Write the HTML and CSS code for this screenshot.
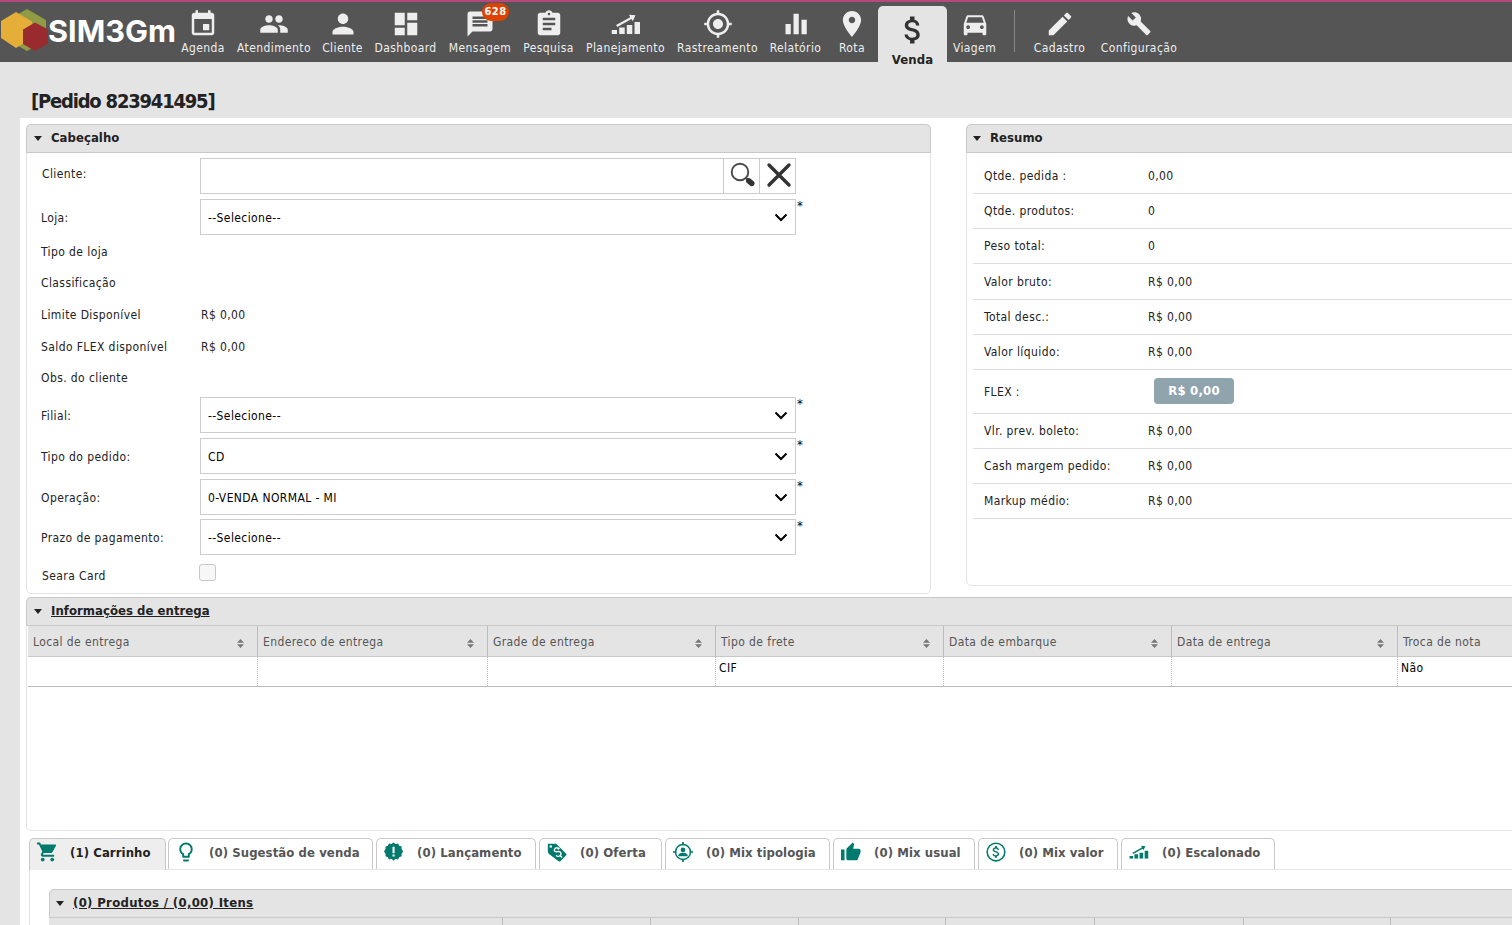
FILE: index.html
```html
<!DOCTYPE html>
<html lang="pt-BR">
<head>
<meta charset="utf-8">
<title>SIM3Gm - Pedido</title>
<link rel="stylesheet" href="styles.css">
</head>
<body>
<svg class="defs" width="0" height="0">
  <symbol id="growth" viewBox="0 0 29 20"><path d="M0 16h5.500v4H0zM7.700 13.500h5.500V20H7.700zM15.300 11h5.500v9h-5.500zM23 8h5.500v12H23z"/><path d="M4.600 11L18.800 3.200 17.500.800l6.500.400-2.700 6-1.300-2.100L5.800 13z"/></symbol>
  <symbol id="sort" viewBox="0 0 7 9"><path d="M3.500 0L7 3.800H0zM0 5.200h7L3.500 9z"/></symbol>
</svg>
<header class="topbar">
  <svg class="logo" width="175" height="60" viewBox="0 2 175 60">
    <path fill="#8f9c45" d="M27 9l19 11v20L27 51 8 40V20z"/>
    <path fill="#e5ae39" d="M16 12l16 9.500V38L16 48 1 38V21z"/>
    <path fill="#992a2e" d="M35 22.500l13 7v14L35 51 23 44V29.500z"/>
    <text x="48" y="42" textLength="128" lengthAdjust="spacingAndGlyphs">SIM3Gm</text>
  </svg>
  <nav class="nav">
    <a class="item agenda"><svg viewBox="0 0 24 24"><path d="M19 3h-1V1h-2v2H8V1H6v2H5c-1.110 0-1.990.900-1.990 2L3 19c0 1.100.890 2 2 2h14c1.100 0 2-.900 2-2V5c0-1.100-.900-2-2-2zm0 16H5V8h14v11zM17 12h-5v5h5v-5z"/></svg><span>Agenda</span></a>
    <a class="item atendimento"><svg viewBox="0 0 24 24"><path d="M16 11c1.660 0 2.990-1.340 2.990-3S17.660 5 16 5c-1.660 0-3 1.340-3 3s1.340 3 3 3zm-8 0c1.660 0 2.990-1.340 2.990-3S9.660 5 8 5C6.340 5 5 6.340 5 8s1.340 3 3 3zm0 2c-2.330 0-7 1.170-7 3.500V19h14v-2.500c0-2.330-4.670-3.500-7-3.500zm8 0c-.290 0-.620.020-.970.050 1.160.840 1.970 1.970 1.970 3.450V19h6v-2.500c0-2.330-4.670-3.500-7-3.500z"/></svg><span>Atendimento</span></a>
    <a class="item cliente"><svg viewBox="0 0 24 24"><path d="M12 12c2.210 0 4-1.790 4-4s-1.790-4-4-4-4 1.790-4 4 1.790 4 4 4zm0 2c-2.670 0-8 1.340-8 4v2h16v-2c0-2.660-5.330-4-8-4z" transform="translate(-.600 -.600) scale(1.050)"/></svg><span>Cliente</span></a>
    <a class="item dashboard"><svg viewBox="0 0 24 24"><path d="M3 13h8V3H3v10zm0 8h8v-6H3v6zm10 0h8V11h-8v10zm0-18v6h8V3h-8z"/></svg><span>Dashboard</span></a>
    <a class="item mensagem"><svg viewBox="0 0 24 24"><path d="M20 2H4c-1.100 0-1.990.900-1.990 2L2 22l4-4h14c1.100 0 2-.900 2-2V4c0-1.100-.900-2-2-2zm-2 12H6v-2h12v2zm0-3H6V9h12v2zm0-3H6V6h12v2z"/></svg><span>Mensagem</span><b class="badge">628</b></a>
    <a class="item pesquisa"><svg viewBox="0 0 24 24"><path d="M19 3h-4.180C14.400 1.840 13.300 1 12 1c-1.300 0-2.400.840-2.820 2H5c-1.100 0-2 .900-2 2v14c0 1.100.900 2 2 2h14c1.100 0 2-.900 2-2V5c0-1.100-.900-2-2-2zm-7 0c.550 0 1 .450 1 1s-.450 1-1 1-1-.450-1-1 .450-1 1-1zm2 14H7v-2h7v2zm3-4H7v-2h10v2zm0-4H7V7h10v2z"/></svg><span>Pesquisa</span></a>
    <a class="item planejamento"><svg viewBox="-.500 -5 30 30"><use href="#growth" width="29" height="20"/></svg><span>Planejamento</span></a>
    <a class="item rastreamento"><svg viewBox="0 0 24 24"><path d="M12 8c-2.210 0-4 1.790-4 4s1.790 4 4 4 4-1.790 4-4-1.790-4-4-4zm8.940 3c-.460-4.170-3.770-7.480-7.940-7.940V1h-2v2.060C6.830 3.520 3.520 6.830 3.060 11H1v2h2.060c.460 4.170 3.770 7.480 7.940 7.940V23h2v-2.060c4.170-.460 7.480-3.770 7.940-7.940H23v-2h-2.060zM12 19c-3.870 0-7-3.130-7-7s3.130-7 7-7 7 3.130 7 7-3.130 7-7 7z"/></svg><span>Rastreamento</span></a>
    <a class="item relatorio"><svg viewBox="0 0 24 24"><path d="M3.600 12h4.200v8.200H3.600zM10 3.800h4.200v16.400H10zM16.400 8.500h4.200v11.700h-4.200z"/></svg><span>Relatório</span></a>
    <a class="item rota"><svg viewBox="0 0 24 24"><path d="M12 2C8.130 2 5 5.130 5 9c0 5.250 7 13 7 13s7-7.750 7-13c0-3.870-3.130-7-7-7zm0 9.500c-1.380 0-2.500-1.120-2.500-2.500s1.120-2.500 2.500-2.500 2.500 1.120 2.500 2.500-1.120 2.500-2.500 2.500z" transform="translate(-.500 -.500) scale(1.040)"/></svg><span>Rota</span></a>
    <a class="item venda"><svg viewBox="0 0 24 24"><path d="M11.800 10.900c-2.270-.590-3-1.200-3-2.150 0-1.090 1.010-1.850 2.700-1.850 1.780 0 2.440.850 2.500 2.100h2.210c-.070-1.720-1.120-3.300-3.210-3.810V3h-3v2.160c-1.940.420-3.500 1.680-3.500 3.610 0 2.310 1.910 3.460 4.700 4.130 2.500.600 3 1.480 3 2.410 0 .690-.490 1.790-2.700 1.790-2.060 0-2.870-.920-2.980-2.100h-2.200c.120 2.190 1.760 3.420 3.680 3.830V21h3v-2.150c1.950-.370 3.500-1.500 3.500-3.550 0-2.840-2.430-3.810-4.700-4.400z"/></svg><span>Venda</span></a>
    <a class="item viagem"><svg viewBox="0 0 24 24"><path d="M18.920 6.010C18.720 5.420 18.160 5 17.500 5h-11c-.660 0-1.210.420-1.420 1.010L3 12v8c0 .550.450 1 1 1h1c.550 0 1-.450 1-1v-1h12v1c0 .550.450 1 1 1h1c.550 0 1-.450 1-1v-8l-2.080-5.990zM6.500 16c-.830 0-1.500-.670-1.500-1.500S5.670 13 6.500 13s1.500.670 1.500 1.500S7.330 16 6.500 16zm11 0c-.830 0-1.500-.670-1.500-1.500s.670-1.500 1.500-1.500 1.500.670 1.500 1.500-.670 1.500-1.500 1.500zM5 11l1.500-4.500h11L19 11H5z"/></svg><span>Viagem</span></a>
    <i class="sep"></i>
    <a class="item cadastro"><svg viewBox="0 0 24 24"><path d="M3 17.250V21h3.750L17.810 9.940l-3.750-3.750L3 17.250zM20.710 7.040c.390-.390.390-1.020 0-1.410l-2.340-2.340c-.390-.390-1.020-.390-1.410 0l-1.830 1.830 3.750 3.750 1.830-1.830z"/></svg><span>Cadastro</span></a>
    <a class="item config"><svg viewBox="-2.300 -2 28.600 28.600"><path d="M22.700 19l-9.100-9.100c.900-2.300.400-5-1.500-6.900-2-2-5-2.400-7.400-1.300L9 6 6 9 1.600 4.700C.400 7.100.900 10.100 2.900 12.100c1.900 1.900 4.600 2.400 6.900 1.500l9.100 9.100c.400.400 1 .400 1.400 0l2.300-2.300c.500-.400.500-1.100.100-1.400z"/></svg><span>Configuração</span></a>
  </nav>
</header>
<h1>[Pedido 823941495]</h1>
<main>
  <div class="columns">
    <section class="panel order">
      <h2>Cabeçalho</h2>
      <div class="fields">
        <div class="row client"><label>Cliente:</label><div class="search"><input type="text"><button><svg width="26" height="26" viewBox="0 0 26 26"><circle cx="10" cy="10" r="8.300" fill="#fff" stroke="#4a4a4a" stroke-width="1.900"/><path d="M16 16l2 2" stroke="#444" stroke-width="2"/><path d="M18.800 18.800l3 2.600" stroke="#333" stroke-width="5.500" stroke-linecap="round"/></svg></button><button><svg width="26" height="26" viewBox="0 0 26 26"><path d="M3 3l20 20M23 3L3 23" stroke="#333" stroke-width="3.400" stroke-linecap="round"/></svg></button></div></div>
        <div class="row select"><label>Loja:</label><div class="dd">--Selecione--<svg width="14" height="9" viewBox="0 0 14 9"><path d="M1.500 1.500L7 7l5.500-5.500"/></svg></div><b>*</b></div>
        <div class="row info"><label>Tipo de loja</label></div>
        <div class="row info short"><label>Classificação</label></div>
        <div class="row info"><label>Limite Disponível</label><span>R$ 0,00</span></div>
        <div class="row info"><label>Saldo FLEX disponível</label><span>R$ 0,00</span></div>
        <div class="row info short"><label>Obs. do cliente</label></div>
        <div class="row select filial"><label>Filial:</label><div class="dd">--Selecione--<svg width="14" height="9" viewBox="0 0 14 9"><path d="M1.500 1.500L7 7l5.500-5.500"/></svg></div><b>*</b></div>
        <div class="row select"><label>Tipo do pedido:</label><div class="dd">CD<svg width="14" height="9" viewBox="0 0 14 9"><path d="M1.500 1.500L7 7l5.500-5.500"/></svg></div><b>*</b></div>
        <div class="row select"><label>Operação:</label><div class="dd caps">0-VENDA NORMAL - MI<svg width="14" height="9" viewBox="0 0 14 9"><path d="M1.500 1.500L7 7l5.500-5.500"/></svg></div><b>*</b></div>
        <div class="row select prazo"><label>Prazo de pagamento:</label><div class="dd">--Selecione--<svg width="14" height="9" viewBox="0 0 14 9"><path d="M1.500 1.500L7 7l5.500-5.500"/></svg></div><b>*</b></div>
        <div class="row card"><label>Seara Card</label><i class="check"></i></div>
      </div>
    </section>
    <section class="panel summary">
      <h2>Resumo</h2>
      <dl>
        <div class="first"><dt>Qtde. pedida :</dt><dd>0,00</dd></div>
        <div><dt>Qtde. produtos:</dt><dd>0</dd></div>
        <div><dt>Peso total:</dt><dd>0</dd></div>
        <div class="tall"><dt>Valor bruto:</dt><dd>R$ 0,00</dd></div>
        <div><dt>Total desc.:</dt><dd>R$ 0,00</dd></div>
        <div><dt>Valor líquido:</dt><dd>R$ 0,00</dd></div>
        <div class="flex"><dt>FLEX :</dt><dd><b>R$ 0,00</b></dd></div>
        <div><dt>Vlr. prev. boleto:</dt><dd>R$ 0,00</dd></div>
        <div><dt>Cash margem pedido:</dt><dd>R$ 0,00</dd></div>
        <div><dt>Markup médio:</dt><dd>R$ 0,00</dd></div>
      </dl>
    </section>
  </div>
  <section class="panel delivery">
    <h2><u>Informações de entrega</u></h2>
    <div class="grid head">
      <span>Local de entrega<svg><use href="#sort"/></svg></span><span>Endereco de entrega<svg><use href="#sort"/></svg></span><span>Grade de entrega<svg><use href="#sort"/></svg></span><span>Tipo de frete<svg><use href="#sort"/></svg></span><span>Data de embarque<svg><use href="#sort"/></svg></span><span>Data de entrega<svg><use href="#sort"/></svg></span><span>Troca de nota</span>
    </div>
    <div class="grid line"><span></span><span></span><span></span><span>CIF</span><span></span><span></span><span>Não</span></div>
  </section>
  <div class="tabs">
    <a class="tab t1 active"><svg viewBox="1 1.500 21 21"><path d="M7 18c-1.100 0-1.990.900-1.990 2S5.900 22 7 22s2-.900 2-2-.900-2-2-2zM1 2v2h2l3.600 7.590-1.350 2.450c-.160.280-.250.610-.250.960 0 1.100.900 2 2 2h12v-2H7.420c-.140 0-.250-.110-.250-.250l.030-.120.900-1.630h7.450c.750 0 1.410-.410 1.750-1.030l3.580-6.490c.080-.140.120-.310.120-.480 0-.550-.450-1-1-1H5.210l-.940-2H1zm16 16c-1.100 0-1.990.900-1.990 2s.890 2 1.990 2 2-.900 2-2-.900-2-2-2z"/></svg><span>(1) Carrinho</span></a>
    <a class="tab t2"><svg viewBox="1.500 1.500 21 21"><path d="M9 21c0 .550.450 1 1 1h4c.550 0 1-.450 1-1v-1H9v1zm3-19C8.140 2 5 5.140 5 9c0 2.380 1.190 4.470 3 5.740V17c0 .550.450 1 1 1h6c.550 0 1-.450 1-1v-2.260c1.810-1.270 3-3.360 3-5.740 0-3.860-3.140-7-7-7zm2.850 11.100l-.850.600V16h-4v-2.300l-.850-.600C7.800 12.160 7 10.630 7 9c0-2.760 2.240-5 5-5s5 2.240 5 5c0 1.630-.800 3.160-2.150 4.100z"/></svg><span>(0) Sugestão de venda</span></a>
    <a class="tab t3"><svg viewBox="1 1 23 23"><path d="M12 1.500l2.300 1.700 2.900-.600 1.300 2.600 2.800.900-.100 3L23 12l-1.800 2.500.100 3-2.800.900-1.300 2.600-2.900-.600L12 22.500l-2.300-2.100-2.900.600-1.300-2.600-2.800-.900.100-3L1 12l1.800-2.900-.100-3 2.800-.900 1.300-2.600 2.900.600zM10.800 6.500v7.300h2.400V6.500zm0 9v2.300h2.400v-2.300z"/></svg><span>(0) Lançamento</span></a>
    <a class="tab t4"><svg viewBox="0 0 24 24"><path d="M1 2h10l12 12c.600.600.600 1.400 0 2l-7 7c-.600.600-1.400.600-2 0L2 14 1 11z"/><circle cx="4.500" cy="5.500" r="1.500" fill="#fff"/><path d="M13.500 7.500c-2.500-1.500-5.500.500-4.500 3s4 .500 6 1 2.500 3.500.500 5-4 .500-4.500-.500M13 9l2-2M16 16.500l2 2" fill="none" stroke="#fff" stroke-width="1.700"/></svg><span>(0) Oferta</span></a>
    <a class="tab t5"><svg viewBox="0 0 24 24"><path d="M12 0v4M12 20v4M0 12h4M20 12h4" stroke="#007a6c" stroke-width="2"/><circle cx="12" cy="12" r="9" fill="none" stroke="#007a6c" stroke-width="1.800"/><circle cx="12" cy="9.500" r="2.800"/><path d="M6.500 17v-1c0-2 3-3 5.500-3s5.500 1 5.500 3v1z"/></svg><span>(0) Mix tipologia</span></a>
    <a class="tab t6"><svg viewBox="1 .500 22.500 22.500"><path d="M1 21h4V9H1v12zm22-11c0-1.100-.900-2-2-2h-6.310l.950-4.570.030-.320c0-.410-.170-.790-.440-1.060L14.170 1 7.590 7.590C7.220 7.950 7 8.450 7 9v10c0 1.100.900 2 2 2h9c.830 0 1.540-.500 1.840-1.220l3.020-7.050c.090-.230.140-.470.140-.730v-2z"/></svg><span>(0) Mix usual</span></a>
    <a class="tab t7"><svg viewBox="0 0 24 24"><circle cx="12" cy="12" r="10.600" fill="none" stroke="#007a6c" stroke-width="1.900"/><path transform="translate(2.900 2.600) scale(.780)" d="M11.800 10.900c-2.270-.590-3-1.200-3-2.150 0-1.090 1.010-1.850 2.700-1.850 1.780 0 2.440.850 2.500 2.100h2.210c-.070-1.720-1.120-3.300-3.210-3.810V3h-3v2.160c-1.940.420-3.500 1.680-3.500 3.610 0 2.310 1.910 3.460 4.700 4.130 2.500.600 3 1.480 3 2.410 0 .690-.490 1.790-2.700 1.790-2.060 0-2.870-.920-2.980-2.100h-2.200c.120 2.190 1.760 3.420 3.680 3.830V21h3v-2.150c1.950-.370 3.500-1.500 3.500-3.550 0-2.840-2.430-3.810-4.700-4.400z"/></svg><span>(0) Mix valor</span></a>
    <a class="tab t8"><svg viewBox="-.500 -5 30 30"><use href="#growth" width="29" height="20"/></svg><span>(0) Escalonado</span></a>
  </div>
  <div class="tabbody">
    <section class="panel products">
      <h2><u>(0) Produtos / (0,00) Itens</u></h2>
      <div class="grid phead"><span></span><span></span><span></span><span></span><span></span><span></span><span></span><span></span></div>
    </section>
  </div>
</main>
</body>
</html>
```

FILE: styles.css
```css
* { box-sizing: border-box; }
html, body { height: 925px; overflow: hidden; }
body { margin: 0; background: #e4e4e4; color: #222; font: 12px "DejaVu Sans Condensed", "DejaVu Sans", sans-serif; font-stretch: condensed; letter-spacing: .4px; }
.defs { position: absolute; }

.topbar { display: flex; height: 62px; border-top: 2px solid #b5487d; background: #555; }
.logo { flex: none; }
.logo text { font: 700 30px Inter, sans-serif; fill: #fff; letter-spacing: 0; }
.nav { display: flex; height: 68px; }
.item { position: relative; display: flex; flex: none; flex-direction: column; align-items: center; padding-top: 7px; color: #eee; white-space: nowrap; }
.item svg { flex: none; width: 30px; height: 30px; fill: #eee; }
.item span { margin-top: 1px; line-height: 16px; }
.agenda { width: 56px; }
.atendimento { width: 86px; }
.cliente { width: 51px; }
.dashboard { width: 75px; }
.mensagem { width: 74px; }
.pesquisa { width: 63px; }
.planejamento { width: 91px; }
.rastreamento { width: 93px; }
.relatorio { width: 63px; }
.rota { width: 38px; margin: 0 7px 0 6px; }
.venda { width: 69px; height: 64px; margin-top: 4px; padding-top: 6px; border-radius: 5px 5px 0 0; background: #e4e4e4; color: #222; font-weight: bold; font-size: 13px; letter-spacing: .1px; }
.venda svg { width: 36px; height: 36px; fill: #333; }
.venda span { margin-top: 4px; }
.viagem { width: 55px; }
.sep { width: 1px; height: 42px; margin: 8px 13px 0 12px; background: #888; }
.cadastro { width: 63px; }
.config { width: 88px; margin-left: 4px; }
.badge { position: absolute; left: 39px; top: 1px; width: 27px; height: 18px; border-radius: 9px; background: #dd4200; color: #fff; font-size: 11px; line-height: 18px; text-align: center; }

h1 { height: 56px; margin: 0; padding: 25px 0 0 31px; font-size: 20px; line-height: 28px; letter-spacing: -1.200px; }
main { width: 1540px; height: 807px; margin-left: 20px; padding: 6px 0 0 6px; background: #fff; }
.columns { display: flex; gap: 35px; align-items: flex-start; }
.panel { flex: none; border: 1px solid #e4e4e4; border-radius: 5px; }
h2 { position: relative; height: 29px; margin: -1px; padding-left: 24px; border: 1px solid #c8c8c8; border-radius: 5px 5px 0 0; background: #e4e4e4; font-size: 13px; line-height: 26px; letter-spacing: .040px; }
h2::before { content: ""; position: absolute; left: 7px; top: 11px; border: 4.500px solid transparent; border-top: 5px solid #222; border-bottom: 0; }
.order { width: 905px; height: 470px; }
.fields { padding: 6px 0 0 14px; }
.row { display: flex; align-items: center; height: 36px; margin-bottom: 5px; }
.row label { width: 159px; flex: none; padding-top: 1px; }
.client label { padding: 0 0 5px 1px; }
.search { display: flex; width: 596px; height: 36px; border: 1px solid #ccc; }
.search input { flex: 1; min-width: 0; padding: 0; border: 0; }
.search button { width: 36px; padding: 0 0 2px 2px; border: 0; border-left: 1px solid #ccc; background: #fff; }
.search svg { display: block; margin: auto; }
.dd { display: flex; align-items: center; justify-content: space-between; width: 596px; height: 36px; padding: 1px 7px 0; border: 1px solid #ccc; color: #000; }
.dd svg { fill: none; stroke: #000; stroke-width: 2; }
.row b { align-self: flex-start; margin: -1px 0 0 1px; font-weight: normal; font-size: 13px; color: #000; }
.select:nth-child(2) { margin-bottom: 0; }
.info { height: 32px; margin: 0; }
.info span { padding: 1px 0 0 1px; }
.info.short { height: 31px; }
.info.short label { padding: 0; }
.filial { margin-top: 4px; }
.prazo { margin-top: -1px; }
.card { align-items: flex-start; }
.card label { padding: 9px 0 0 1px; width: 158px; }
.check { width: 17px; height: 17px; margin-top: 4px; border: 1px solid #c8c8c8; border-radius: 3px; background: #f7f7f7; }

.summary { width: 600px; height: 462px; }
.summary h2 { padding-left: 23px; }
.summary h2::before { left: 6px; }
dl { margin: 0; padding: 6px 0 0 6px; }
dl div { display: flex; align-items: center; height: 35px; padding-left: 11px; border-bottom: 1px solid #ddd; }
dl .first, dl .tall { height: 36px; }
dl .flex { height: 44px; }
dt { width: 164px; }
dd { margin: 0; }
dd b { display: block; width: 80px; height: 26px; margin: -1px 0 0 6px; border-radius: 4px; background: #90a4ae; color: #fff; font-size: 13px; line-height: 26px; text-align: center; letter-spacing: .200px; }

.delivery { height: 234px; margin-top: 3px; border-radius: 5px; }
.grid { display: grid; grid-template-columns: 230px 230px 228px 228px 228px 226px 150px; margin-left: 1px; }
.head { height: 31px; margin-top: 1px; background: #e4e4e4; border-bottom: 1px solid #c8c8c8; color: #555; }
.head span { display: flex; align-items: center; justify-content: space-between; padding: 1px 13px 0 5px; border-right: 1px solid #bbb; }
.head svg { width: 7px; height: 9px; margin-top: 3px; fill: #777; }
.line { height: 30px; border-bottom: 1px solid #bbb; color: #000; }
.line span { padding: 4px 3px; border-right: 1px dotted #bbb; }

.tabs { display: flex; height: 32px; margin: 7px 0 0 3px; border-bottom: 1px solid #e4e4e4; }
.tab { display: flex; flex: none; height: 31px; margin-right: 3px; padding: 3px 0 0 7px; border: 1px solid #c8c8c8; border-bottom: 0; border-radius: 5px 5px 0 0; color: #555; font-weight: bold; font-size: 13px; letter-spacing: .080px; white-space: nowrap; }
.tab svg { flex: none; width: 20px; height: 20px; margin-top: -.500px; fill: #007a6c; }
.tab span { margin-left: 13px; line-height: 22px; }
.active { height: 32px; margin-right: 2px; background: #eee; color: #222; }
.t1 { width: 137px; }
.t2 { width: 205px; }
.t3 { width: 160px; }
.t4 { width: 123px; }
.t5 { width: 165px; }
.t6 { width: 142px; }
.t7 { width: 140px; }
.t8 { width: 154px; }
.tabbody { height: 80px; margin-left: 3px; padding: 19px 0 0 19px; border-left: 1px solid #e4e4e4; }
.products { height: 80px; }
.products h2 { padding-left: 23px; letter-spacing: .320px; }
.products h2::before { left: 6px; }
.phead { grid-template-columns: 454px 148px 148px 147px 149px 149px 147px 150px; height: 30px; margin: 1px 0 0 -1px; background: #e4e4e4; }
.phead span { border-right: 1px solid #bbb; }
```
